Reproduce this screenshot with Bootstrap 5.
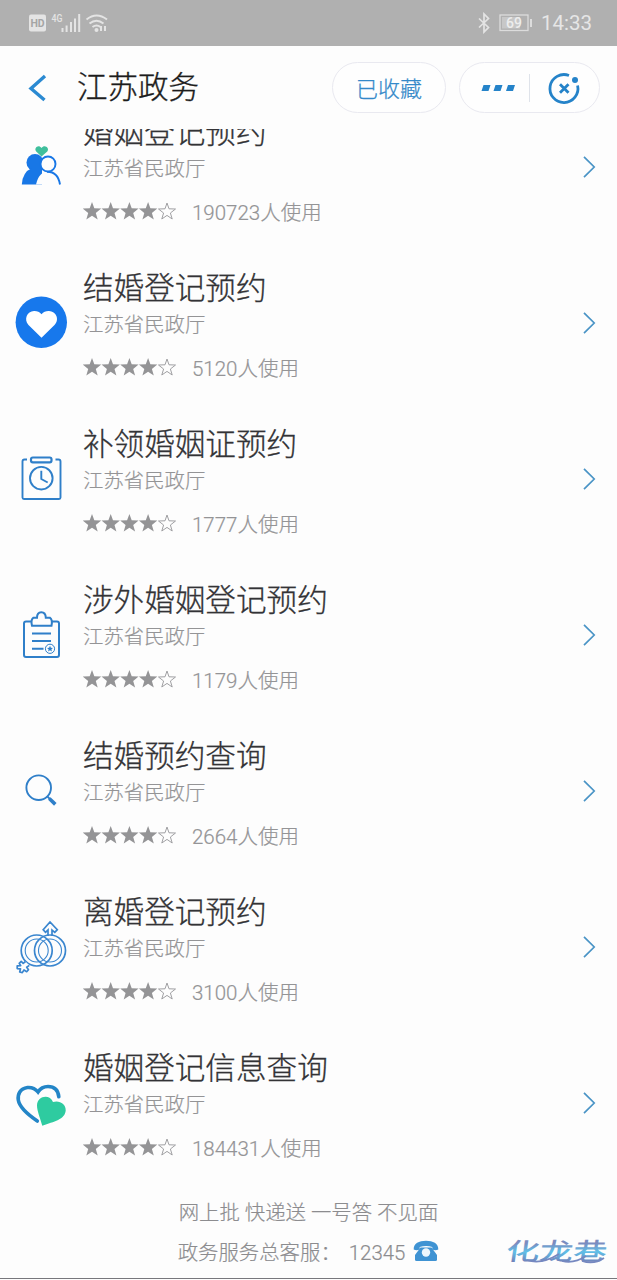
<!DOCTYPE html>
<html lang="zh-CN">
<head>
<meta charset="utf-8">
<meta name="viewport" content="width=device-width, initial-scale=1">
<title>江苏政务</title>
<link href="https://cdn.jsdelivr.net/npm/bootstrap@5.3.0/dist/css/bootstrap.min.css" rel="stylesheet">
<style>
  body { font-family: Roboto, "Noto Sans CJK SC", sans-serif; font-weight: 300; background: #fdfdfd; height: 1280px; overflow: hidden; }
  svg { display: block; flex: none; }
  .statusbar { height: 46px; background: #b0b0b0; color: #e6e6e6; padding: 0 25px 0 28px; }
  .clock { font-size: 20.5px; font-weight: 400; line-height: 46px; }
  .topbar { height: 83px; padding: 0 17px 0 26px; }
  .app-name { font-size: 30.5px; line-height: 44px; color: #1c1c1c; margin-left: 29px; padding-top: 1px; -webkit-text-stroke: .35px #1c1c1c; }
  .pill { height: 51px; border: 1px solid #e9e9f0; border-radius: 26px; background: #fefefe; }
  .pill-fav { width: 114px; font-size: 22px; padding-top: 3px; color: #3489c9; -webkit-text-stroke: .25px #3489c9; }
  .pill-menu { width: 141px; margin-left: 13px; }
  .pill-menu .rule { width: 1px; height: 28px; background: #dfe3ea; }
  .scroller { height: 1064px; overflow: hidden; }
  .services { margin-top: -19px; }
  .service { height: 156px; padding: 0 20px 0 11px; }
  .service > svg { margin-top: 27px; }
  .service-text { margin-left: 12px; padding-top: 1px; }
  .service-name { font-size: 30.6px; line-height: 44px; color: #333336; -webkit-text-stroke: .3px #333336; }
  .service-org { font-size: 20.4px; line-height: 28px; color: #949496; -webkit-text-stroke: .2px #949496; }
  .service-use { margin-top: 14px; height: 28px; font-size: 20.5px; line-height: 28px; color: #949496; -webkit-text-stroke: .2px #949496; }
  .usage { margin-left: 15px; padding-top: 3px; }
  .foot { height: 86px; color: #8c8c8f; font-size: 20.4px; border-bottom: 1px solid #77777c; }
  .foot-line { line-height: 40px; -webkit-text-stroke: .2px #8c8c8f; }
  .watermark { right: 9px; bottom: 10px; }
</style>
</head>
<body>
<svg width="0" height="0" class="position-absolute">
  <defs>
    <path id="st" d="M9 0 11.300 6.300 18.200 6.600 12.800 10.900 14.700 17.600 9 13.700 3.300 17.600 5.200 10.900 -.2 6.600 6.700 6.300Z"/>
    <symbol id="stars" viewBox="0 0 94 18">
      <g fill="#949496"><use href="#st"/><use href="#st" x="18.7"/><use href="#st" x="37.4"/><use href="#st" x="56.1"/></g>
      <path d="M84 1 86 6.800 92.500 7 87.400 11 89.200 17 84 13.400 78.800 17 80.600 11 75.500 7 82 6.800Z" fill="none" stroke="#a0a0a3"/>
    </symbol>
    <symbol id="next" viewBox="0 0 16 24"><path d="M3 1.800 13.200 12 3 22.200" fill="none" stroke="#4a94c6" stroke-width="1.7"/></symbol>
  </defs>
</svg>

<div class="statusbar d-flex align-items-center justify-content-between">
  <svg width="82" height="24" viewBox="0 0 82 24" fill="#e4e4e4">
    <rect x="1" y="3.5" width="17" height="17" rx="2"/>
    <text x="9.5" y="16" font-size="10.500" font-weight="700" text-anchor="middle" textLength="14" fill="#a5a5a5">HD</text>
    <text x="23.5" y="10.5" font-size="11" font-weight="500" textLength="11" lengthAdjust="spacingAndGlyphs">4G</text>
    <path d="M33.5 17h2v4h-2zM37.600 14.500h2v6.500h-2zM42 11h2v10h-2zM46 7.500h2v13.500h-2zM50.200 3h2v18h-2z"/>
    <g fill="none" stroke="#e4e4e4" stroke-width="2"><path d="M58.500 8.500q10-8 20.500 0M61.500 12.500q7-5.500 14 0M64.500 16q4-3 8 0"/></g>
    <circle cx="68.500" cy="19" r="2"/><path d="M72 15h2v5h-2zM76 15h2v5h-2z"/>
  </svg>
  <div class="d-flex align-items-center">
    <svg width="14" height="22" viewBox="0 0 14 22" fill="none" stroke="#e4e4e4" stroke-width="1.700"><path d="M2 6.500 11.500 15.500 7 20V2l4.500 4.500L2 15.500"/></svg>
    <svg class="ms-2" width="34" height="18" viewBox="0 0 34 18"><rect x="1" y="1" width="28" height="15.500" fill="none" stroke="#dcdcdc" stroke-width="1.300"/><rect x="3" y="3" width="18" height="11.500" fill="#c7c7c7"/><path d="M32 5v8" stroke="#dcdcdc" stroke-width="2"/><text x="15" y="14" text-anchor="middle" font-size="14" font-weight="500" fill="#ededed">69</text></svg>
    <span class="clock ms-2">14:33</span>
  </div>
</div>

<header class="topbar d-flex align-items-center">
  <svg width="22" height="30" viewBox="0 0 22 30"><path d="M19 3 5 15.500 18.500 27" fill="none" stroke="#2b8ad2" stroke-width="3.400"/></svg>
  <div class="app-name">江苏政务</div>
  <div class="pill pill-fav ms-auto d-flex align-items-center justify-content-center">已收藏</div>
  <div class="pill pill-menu d-flex align-items-center">
    <svg width="69" height="30" viewBox="0 0 69 30" fill="#2583c9"><path d="M23.500 12h7l-2 6h-7zM35.500 12h7l-2 6h-7zM48 12h7l-2 6h-7z"/></svg>
    <span class="rule"></span>
    <svg width="68" height="36" viewBox="0 0 68 36" fill="none" stroke="#2583c9" stroke-width="2.800"><path d="M39 5.500A14 14 0 1 0 47.600 15.500M30 14.200l8.500 8.500M38.500 14.200 30 22.700"/><circle cx="45" cy="10" r="3" fill="#2583c9" stroke="none"/></svg>
  </div>
</header>

<main class="scroller">
  <div class="services">
    <div class="service d-flex">
      <svg width="60" height="60" viewBox="0 0 60 60">
        <path d="M30.500 19.500 25.200 14.500C22.500 11 27.500 6.800 30.500 11c3-4.200 8.500 0 5.800 3.500Z" fill="#3fbf9c"/>
        <circle cx="24" cy="25.500" r="8.500" fill="#1877e6"/><path d="M10.800 47.500Q11.500 35 21 31h10v16.500Z" fill="#1877e6"/>
        <path d="M25 47.500Q28 34.500 37.500 34.500T49 47.500Z" fill="#fdfdfd"/>
        <path d="M36 34.700Q47 34.500 49 47.500" fill="none" stroke="#1877e6" stroke-width="1.900"/>
        <circle cx="37" cy="27" r="7.500" fill="#fdfdfd" stroke="#1877e6" stroke-width="1.900"/>
      </svg>
      <div class="service-text"><div class="service-name">婚姻登记预约</div><div class="service-org">江苏省民政厅</div>
        <div class="service-use d-flex align-items-center"><svg width="94" height="18"><use href="#stars"/></svg><span class="usage">190723人使用</span></div></div>
      <svg class="ms-auto" width="16" height="60"><use href="#next" y="18" width="16" height="24"/></svg>
    </div>
    <div class="service d-flex">
      <svg width="60" height="60" viewBox="0 0 60 60"><circle cx="30.300" cy="29.300" r="25.700" fill="#1778ec"/><path d="M30.500 44.700 17.500 32C12.500 26.500 16 18.200 23 18q4.500-.2 7.500 3.200Q33.500 17.800 38 18c7 .2 11 8.500 5.500 14Z" fill="#fff"/></svg>
      <div class="service-text"><div class="service-name">结婚登记预约</div><div class="service-org">江苏省民政厅</div>
        <div class="service-use d-flex align-items-center"><svg width="94" height="18"><use href="#stars"/></svg><span class="usage">5120人使用</span></div></div>
      <svg class="ms-auto" width="16" height="60"><use href="#next" y="18" width="16" height="24"/></svg>
    </div>
    <div class="service d-flex">
      <svg width="60" height="60" viewBox="0 0 60 60" fill="none" stroke="#2f7fc9" stroke-width="1.900"><path d="M16 10.500h-2.500q-2 0-2 2v36q0 1.500 1.500 1.500h35q1.500 0 1.500-1.500v-36q0-2-2-2H44.500"/><rect x="20" y="8.500" width="20.500" height="4.800" rx="1.800" stroke-width="2.200"/><circle cx="30.300" cy="29.200" r="11.300"/><path d="M30.300 21.700V30l6.400 3.500"/></svg>
      <div class="service-text"><div class="service-name">补领婚姻证预约</div><div class="service-org">江苏省民政厅</div>
        <div class="service-use d-flex align-items-center"><svg width="94" height="18"><use href="#stars"/></svg><span class="usage">1777人使用</span></div></div>
      <svg class="ms-auto" width="16" height="60"><use href="#next" y="18" width="16" height="24"/></svg>
    </div>
    <div class="service d-flex">
      <svg width="60" height="60" viewBox="0 0 60 60" fill="none" stroke="#2f7fc9" stroke-width="2"><path d="M20 16.500h-5q-2 0-2 2v31.500q0 2 2 2h31q2 0 2-2V18.500q0-2-2-2h-5"/><path d="M21 20.700q-1.500-6 1.500-8h3.500q0-5.500 4.300-5.500t4.500 5.500h4q3 2 1.700 8Z"/><path d="M21 28.500h19M21 36h19M21 43.700h11.500"/><circle cx="39" cy="43.800" r="4.600" stroke-width="1"/><path d="m39 40.800.9 1.900 2.100.2-1.600 1.400.5 2.100-1.900-1.100-1.900 1.100.5-2.100-1.600-1.400 2.100-.2Z" fill="#2f7fc9" stroke="none"/></svg>
      <div class="service-text"><div class="service-name">涉外婚姻登记预约</div><div class="service-org">江苏省民政厅</div>
        <div class="service-use d-flex align-items-center"><svg width="94" height="18"><use href="#stars"/></svg><span class="usage">1179人使用</span></div></div>
      <svg class="ms-auto" width="16" height="60"><use href="#next" y="18" width="16" height="24"/></svg>
    </div>
    <div class="service d-flex">
      <svg width="60" height="60" viewBox="0 0 60 60" fill="none" stroke="#2f7fc9"><circle cx="27.700" cy="26.700" r="12.300" stroke-width="1.900"/><path d="m36.300 35.400 3 3" stroke-width="2"/><path d="m38.300 37.500 6 5.900" stroke-width="3.600"/></svg>
      <div class="service-text"><div class="service-name">结婚预约查询</div><div class="service-org">江苏省民政厅</div>
        <div class="service-use d-flex align-items-center"><svg width="94" height="18"><use href="#stars"/></svg><span class="usage">2664人使用</span></div></div>
      <svg class="ms-auto" width="16" height="60"><use href="#next" y="18" width="16" height="24"/></svg>
    </div>
    <div class="service d-flex">
      <svg width="60" height="60" viewBox="0 0 60 60" fill="none" stroke="#3a86cf" stroke-width="1.700">
        <path d="M37 19v-6l-2.500 2.300-2.300-2.600L39 5l7.300 7.700-2.500 2.600L41 13v6" fill="#fdfdfd"/>
        <circle cx="25.700" cy="33.500" r="15.500"/><circle cx="25.700" cy="33.500" r="11.500" stroke-width="1.100"/>
        <circle cx="39" cy="33.500" r="15.500"/><circle cx="39" cy="33.500" r="11.500" stroke-width="1.100"/>
        <path d="m14.500 44.500-2.300 1.800-2-2-2 2 1.500 2.300-3.500.3v2.700l3.300.2-.8 3.200 2.600.6 1.700-2.600 2.700 1.700 1.800-2-1.800-2.500 2.600-1.800" fill="#fdfdfd" stroke-linejoin="round"/></svg>
      <div class="service-text"><div class="service-name">离婚登记预约</div><div class="service-org">江苏省民政厅</div>
        <div class="service-use d-flex align-items-center"><svg width="94" height="18"><use href="#stars"/></svg><span class="usage">3100人使用</span></div></div>
      <svg class="ms-auto" width="16" height="60"><use href="#next" y="18" width="16" height="24"/></svg>
    </div>
    <div class="service d-flex">
      <svg width="60" height="60" viewBox="0 0 60 60"><path d="M47.800 23.700C47 16 42 13.500 37 13.500q-6.500 0-10 5.500-4-5-10.500-4.500C9 15.500 6.500 21.500 7.300 27 8.500 34.500 16 41 26.300 48" fill="none" stroke="#2385c7" stroke-width="3.600" stroke-linecap="round"/><path d="M31.300 52.700C29.500 46 26 38 26 32.500 26 22.500 39 20.500 42 29 48.500 27 55 31 54.700 37.500 54 46.500 43 48.500 31.300 52.700Z" fill="#2ecba0"/></svg>
      <div class="service-text"><div class="service-name">婚姻登记信息查询</div><div class="service-org">江苏省民政厅</div>
        <div class="service-use d-flex align-items-center"><svg width="94" height="18"><use href="#stars"/></svg><span class="usage">184431人使用</span></div></div>
      <svg class="ms-auto" width="16" height="60"><use href="#next" y="18" width="16" height="24"/></svg>
    </div>
  </div>
</main>

<footer class="foot position-relative text-center">
  <div class="foot-line">网上批 快递送 一号答 不见面</div>
  <div class="foot-line d-flex justify-content-center align-items-center">
    <span>政务服务总客服：</span><span class="ms-2">12345</span>
    <svg class="ms-2 mb-1" width="26" height="22" viewBox="0 0 26 22" fill="#3f93d3"><path d="M.7 9.500C.5 3.500 6 .8 13 .8S25.500 3.500 25.300 9.500q-2.800 1.500-6 0V7q-6-2-12.600 0v2.500q-3.200 1.500-6 0Z"/><path d="M7.500 7.500h11L24 15v4.500q0 1.500-1.500 1.500h-19Q2 21 2 19.500V15Z"/><circle cx="13" cy="12.500" r="4.200" fill="#eef7fd"/></svg>
  </div>
  <svg class="watermark position-absolute" width="106" height="32" viewBox="0 0 106 32">
    <defs><linearGradient id="wm" x1="0" y1="0" x2="0" y2="1"><stop offset=".2" stop-color="#7b8cc0"/><stop offset=".5" stop-color="#5fc0e8"/><stop offset=".85" stop-color="#7083bb"/></linearGradient></defs>
    <text transform="translate(3 24) skewX(-8) scale(1.400 1)" font-size="24" font-weight="500" fill="url(#wm)" textLength="72">化龙巷</text>
    <path d="M25 24q14 5 32-6M60 25q12 3 24-5M80 25q12 4 22-3" fill="none" stroke="#7688c0" stroke-width="1.700"/>
  </svg>
</footer>
<script src="https://cdn.jsdelivr.net/npm/bootstrap@5.3.0/dist/js/bootstrap.bundle.min.js"></script>
</body>
</html>
